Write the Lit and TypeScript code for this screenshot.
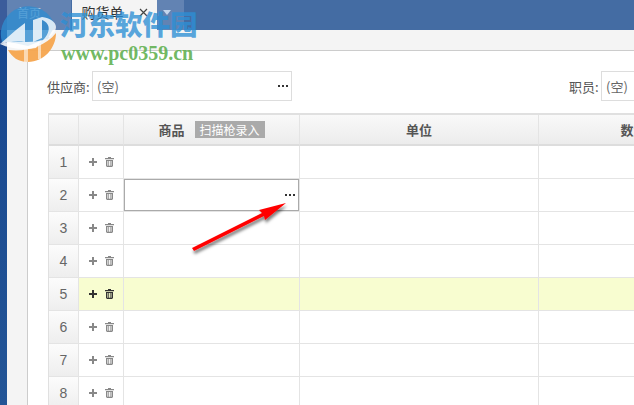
import { LitElement, html, css, svg } from "lit";
import { customElement } from "lit/decorators.js";

const plus = svg`<path d="M3 0h2v3h3v2H5v3H3V5H0V3h3z" fill="currentColor"/>`;
const trash = svg`<g fill="currentColor"><path d="M3 0h3v1h3v1.200H0V1h3z"/><path fill-rule="evenodd" d="M1 3h7v6l-1 1H2L1 9zM2.400 4v4.800h.9V4zM4 4v4.800h.9V4zM5.600 4v4.800h.9V4z"/></g>`;

@customElement("app-root")
export class AppRoot extends LitElement {
  static styles = css`
    :host { display: block; width: 634px; height: 405px; overflow: hidden; position: relative; background: #fff;
      font-family: "Noto Sans CJK SC", "Liberation Sans", sans-serif; color: #555; font-size: 13px; }
    .top { height: 30px; background: #446ca3; display: flex; }
    .lead { width: 7px; background: #3b5c9b; }
    .tab { width: 64px; background: #6283b3; color: #e4ebf4; display: flex; align-items: center; justify-content: center; font-size: 12px; padding: 0 20px 6px 0; box-sizing: border-box; }
    .tab.on { margin-left: 1px; width: 85px; background: #f4f4f4; color: #333; gap: 15px; padding: 0 0 6px 0; font-size: 14px; }
    .tab.more { width: 27px; padding: 0 8px 6px 0; }
    .tri { width: 0; height: 0; border-left: 4px solid transparent; border-right: 4px solid transparent; border-top: 5px solid #c4d6ec; }
    .close { width: 9px; height: 9px; display: block; color: #444; }
    .body { display: flex; height: 375px; }
    .rail { width: 7px; background: linear-gradient(#17468f, #235596); }
    .side { width: 20px; background: #f4f4f4; }
    .main { flex: 1; min-width: 0; display: flex; flex-direction: column; }
    .band { height: 20px; background: #f4f4f4; border-bottom: 1px solid #ccc; flex: none; }
    .work { flex: 1; border-left: 1px solid #ccc; padding: 20px 0 0 19px; min-width: 0; overflow: hidden; }
    .form { display: flex; align-items: center; height: 30px; white-space: nowrap; width: 700px; color: #555; }
    .label { width: 45px; flex: none; }
    .label.b { width: 32px; }
    .field { box-sizing: border-box; height: 30px; border: 1px solid #ddd; display: flex; align-items: center; justify-content: space-between; padding: 0 3px 0 4px; background: #fff; color: #666; flex: none; }
    .field.a { width: 200px; }
    .field.b { width: 100px; }
    .spacer { width: 277px; flex: none; }
    .dots { display: flex; gap: 2px; }
    .dots i { width: 2px; height: 2px; background: #333; display: block; }
    .grid { margin: 12px 0 0 1px; display: grid; width: 720px; grid-template-columns: 30px 45px 176px 239px 190px; grid-template-rows: 31px; grid-auto-rows: 33px; border-top: 2px solid #e0e0e0; border-left: 1px solid #e0e0e0; }
    .cell { box-sizing: border-box; border-right: 1px solid #e4e4e4; border-bottom: 1px solid #e4e4e4; display: flex; align-items: center; justify-content: center; background: #fff; }
    .head { background: linear-gradient(#f9f9f9, #ececec); font-weight: 700; color: #555; border-bottom: 2px solid #ddd; gap: 10px; white-space: nowrap; }
    .num { background: linear-gradient(#fcfcfc, #eeeeee); color: #666; font-size: 14px; font-family: "Liberation Sans", sans-serif; }
    .tag { background: #aaa; color: #fff; font-weight: 400; padding: 0 5px; height: 17px; line-height: 17px; font-size: 12px; }
    .ops { gap: 8px; color: #888; }
    .ops svg { display: block; }
    .hi { background: #f8fdd0; }
    .hi.ops { color: #333; }
    .edit { position: relative; }
    .editor { position: absolute; inset: 0; box-sizing: border-box; border: 1px solid #aaa; display: flex; align-items: center; justify-content: flex-end; padding: 0 3px 0 0; background: #fff; }
    .mark { position: absolute; left: 0; top: 0; pointer-events: none; }
  `;

  dots() {
    return html`<span class="dots"><i></i><i></i><i></i></span>`;
  }

  row(n: number) {
    const hi = n === 5 ? "hi" : "";
    return html`
      <div class="cell num">${n}</div>
      <div class="cell ops ${hi}"><svg width="8" height="8" viewBox="0 0 8 8">${plus}</svg><svg width="9" height="10" viewBox="0 0 9 10">${trash}</svg></div>
      <div class="cell ${hi} ${n === 2 ? "edit" : ""}">${n === 2 ? html`<div class="editor">${this.dots()}</div>` : ""}</div>
      <div class="cell ${hi}"></div>
      <div class="cell ${hi}"></div>`;
  }

  render() {
    return html`
      <div class="top">
        <div class="lead"></div>
        <div class="tab">首页</div>
        <div class="tab on"><span>购货单</span><svg class="close" viewBox="0 0 9 9"><path d="M1 1l7 7M8 1L1 8" stroke="currentColor" stroke-width="1.200" fill="none"/></svg></div>
        <div class="tab more"><span class="tri"></span></div>
      </div>
      <div class="body">
        <div class="rail"></div>
        <div class="side"></div>
        <div class="main">
          <div class="band"></div>
          <div class="work">
            <div class="form">
              <span class="label">供应商:</span>
              <div class="field a"><span>(空)</span>${this.dots()}</div>
              <div class="spacer"></div>
              <span class="label b">职员:</span>
              <div class="field b"><span>(空)</span></div>
            </div>
            <div class="grid">
              <div class="cell head"></div>
              <div class="cell head"></div>
              <div class="cell head"><span>商品</span><span class="tag">扫描枪录入</span></div>
              <div class="cell head">单位</div>
              <div class="cell head">数量</div>
              ${[1, 2, 3, 4, 5, 6, 7, 8].map((n) => this.row(n))}
            </div>
          </div>
        </div>
      </div>
      <svg class="mark" width="634" height="405" viewBox="0 0 634 405">
        <defs><filter id="s" x="-20%" y="-30%" width="150%" height="180%"><feDropShadow dx="1" dy="3" stdDeviation="1.500" flood-color="#000" flood-opacity=".5"/></filter></defs>
        <path d="M192 248L262 213L259 210L286 203L265 220L264 216L194 251z" fill="#f00" filter="url(#s)"/>
      </svg>
      <svg class="mark" width="200" height="70" viewBox="0 0 200 70">
        <path d="M2 42A27 27 0 0 1 55 26L48 38L28 46L10 42z" fill="#2f8ccf" fill-opacity=".8"/>
        <path d="M8 50C24 52 44 48 56 33C56 48 44 62 28 62C18 62 12 57 8 50z" fill="#f5a54e" fill-opacity=".95"/>
        <path d="M0 44L16 30L25 23V42C16 41 8 42 0 44zM33 20L42 17C50 18 56 22 56 27C56 32 50 38 42 41C50 34 52 24 42 20V38L33 42z" fill="#fff" fill-opacity=".8"/>
        <path d="M0 44C12 40 30 44 42 40L36 48C24 50 10 49 0 44z" fill="#fff" fill-opacity=".85"/>
        <path d="M24 49H28V62H24zM38 44H41V59H38z" fill="#fff" fill-opacity=".55"/>
        <text x="60" y="35" font-family="Noto Sans CJK SC" font-weight="900" font-size="27.500" fill="#2d8fd5" fill-opacity=".8">河东软件园</text>
        <text x="61" y="60" font-family="Liberation Serif" font-weight="700" font-size="20" fill="#5fb04f" fill-opacity=".9">www.pc0359.cn</text>
      </svg>
    `;
  }
}
